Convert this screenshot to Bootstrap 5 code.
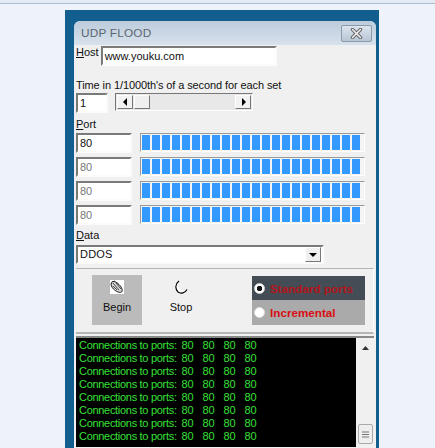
<!DOCTYPE html>
<html lang="en">
<head>
<meta charset="utf-8">
<title>UDP FLOOD</title>
<link href="https://cdn.jsdelivr.net/npm/bootstrap@5.3.0/dist/css/bootstrap.min.css" rel="stylesheet">
<style>
html,body{height:448px;overflow:hidden;}
body{background:#eef3fb;font-family:"Liberation Sans",Arial,sans-serif;font-size:11px;color:#111;line-height:13px;}
.topline{height:4px;border-bottom:1px solid #a9bdd2;background:#e3ebf5;}
.frame{width:314px;height:438px;margin:6px 0 0 65px;padding:11px 3px 0 9px;background:#125f8f;}
.win{width:302px;height:427px;border-radius:6px 6px 0 0;background:#f0f0f0;overflow:hidden;padding:0 2px 0 2px;}
.tbar{height:24px;margin:0 -2px;padding:0 4px 0 7px;background:linear-gradient(#bccbdc,#d8e2ec);color:#5c6670;font-size:11.8px;letter-spacing:.2px;border-radius:6px 6px 0 0;}
.xbtn{width:31px;height:17px;border:1px solid #8a9aab;border-radius:2px;background:linear-gradient(#dbe4ee,#b9c6d4);}
.sunk{background:#fff;border:2px solid;border-color:#7a7a7a #fbfbfb #fbfbfb #7a7a7a;height:20px;padding:0 1px 0 2px;font-size:11px;line-height:16px;white-space:nowrap;overflow:hidden;}
.lbl{height:13px;font-size:11px;white-space:nowrap;}
.host-row{height:20px;margin-top:1px;}
.host-in{width:176px;margin-left:2px;}
.time-lbl{margin-top:12px;height:15px;line-height:15px;font-size:11px;letter-spacing:-.1px;}
.time-row{height:20px;}
.num{width:32px;}
.sbar{width:138px;height:18px;margin-left:7px;background:#e8e8e8;border:1px solid;border-color:#777 #fff #fff #777;padding:1px;}
.sbtn{width:16px;background:#f2f2f2;border:1px solid;border-color:#fff #777 #777 #fff;}
.thumb{width:16px;margin-left:1px;background:#f0f0f0;border:1px solid;border-color:#fff #777 #777 #fff;}
.port-lbl{margin-top:5px;margin-bottom:2px;}
.port-row{height:20px;margin-bottom:4px;}
.port-in{width:56px;}
.port-in.off{color:#777;}
.port-bar.progress{width:225px;height:19px;margin-left:8px;border-radius:0;background:#f4f4f4;border:1px solid;border-color:#999 #fff #fff #999;padding:1px;overflow:hidden;}
.port-fill{flex:none;width:218px;height:100%;background:repeating-linear-gradient(90deg,#3399ff 0,#3399ff 8px,#f4f4f4 8px,#f4f4f4 10px);}
.data-lbl{margin-top:1px;}
.combo{width:248px;height:19px;margin-top:3px;padding-right:1px;font-size:11px;letter-spacing:.2px;line-height:15px;}
.cbtn{width:16px;height:15px;background:#f0f0f0;border:1px solid;border-color:#fff #777 #777 #fff;margin-left:auto;}
.grp{width:298px;height:66px;margin-top:4px;border-top:1px solid #b5b5b5;border-right:1px solid #fff;border-bottom:2px solid #b5b5b5;padding:6px 8px 0 16px;}
.tool{width:50px;height:50px;font-size:11px;color:#111;}
.tool.on{background:#bbb;}
.tool svg{margin-top:5px;margin-bottom:7px;}
.tool-stop{margin-left:14px;}
.radios{width:113px;height:49px;margin-left:auto;margin-top:1px;color:#d80f12;font-weight:700;font-size:11.7px;}
.rad{height:25px;padding-left:2px;gap:5px;background:#aaa;}
.rad.dark{background:#444d55;height:24px;color:#b3141a;}
.rad-dot{width:11px;height:11px;border-radius:50%;background:#fff;border:1px solid #ddd;flex:none;}
.rad-dot.sel{background:radial-gradient(circle,#111 0,#111 2.5px,#fff 3px);}
.logbox{width:298px;height:111px;margin-top:2px;background:#000;border-top:2px solid #888;color:#38e038;}
.loglines{padding:1px 0 0 3px;font-size:11px;line-height:13px;}
.logline{height:13px;white-space:nowrap;letter-spacing:-.3px;}
.lp{display:inline-block;width:21px;letter-spacing:0;}
.lp.first{margin-left:2px;}
.vsb{width:18px;background:#f0f0f0;}
.vthumb{width:15px;height:20px;margin:auto 0 0 1px;position:relative;top:-3px;background:#eee;border:1px solid #aaa;border-radius:2px;color:#777;}
</style>
</head>
<body>
<div class="topline"></div>
<div class="frame">
  <div class="win">
    <div class="tbar d-flex align-items-center justify-content-between">
      <span>UDP FLOOD</span>
      <span class="xbtn d-flex align-items-center justify-content-center">
        <svg width="13" height="11" viewBox="0 0 13 11"><path d="M2.500 1.500L10.500 9.500M10.500 1.500L2.500 9.500" stroke="#666" stroke-width="3.500" stroke-linecap="round"/><path d="M2.500 1.500L10.500 9.500M10.500 1.500L2.500 9.500" stroke="#f4f4f4" stroke-width="1.500" stroke-linecap="round"/></svg>
      </span>
    </div>
    <div class="host-row d-flex align-items-start">
      <span class="lbl"><u>H</u>ost</span>
      <div class="sunk host-in">www.youku.com</div>
    </div>
    <div class="lbl time-lbl">Time in 1/1000th's of a second for each set</div>
    <div class="time-row d-flex align-items-start">
      <div class="sunk num">1</div>
      <div class="sbar d-flex">
        <span class="sbtn d-flex align-items-center justify-content-center"><svg width="5" height="8"><path d="M4 0V8L0 4Z" fill="#000"/></svg></span>
        <span class="thumb"></span>
        <span class="sbtn ms-auto d-flex align-items-center justify-content-center"><svg width="5" height="8"><path d="M1 0V8L5 4Z" fill="#000"/></svg></span>
      </div>
    </div>
    <div class="lbl port-lbl"><u>P</u>ort</div>
    <div class="port-row d-flex align-items-start"><div class="sunk port-in">80</div><div class="progress port-bar"><div class="port-fill"></div></div></div>
    <div class="port-row d-flex align-items-start"><div class="sunk port-in off">80</div><div class="progress port-bar"><div class="port-fill"></div></div></div>
    <div class="port-row d-flex align-items-start"><div class="sunk port-in off">80</div><div class="progress port-bar"><div class="port-fill"></div></div></div>
    <div class="port-row d-flex align-items-start"><div class="sunk port-in off">80</div><div class="progress port-bar"><div class="port-fill"></div></div></div>
    <div class="lbl data-lbl"><u>D</u>ata</div>
    <div class="sunk combo d-flex align-items-start">DDOS
      <span class="cbtn d-flex align-items-center justify-content-center"><svg width="8" height="4"><path d="M0 0H8L4 4Z" fill="#000"/></svg></span>
    </div>
    <div class="grp d-flex align-items-start">
      <div class="tool on d-flex flex-column align-items-center">
        <svg width="14" height="14" viewBox="0 0 14 14"><rect width="14" height="14" fill="#fff"/><path d="M1.500 2.500C3 0.500 6 1.500 9 4.500C12 7.500 13 10.500 11.500 12C9.500 13 6 11.500 3.500 9C1.500 7 0.500 4.500 1.500 2.500Z" fill="#d8d8d8" stroke="#111"/><path d="M3 3L9 10M6 3L11 9M3 6L7 10M2 2L5 1" stroke="#222" stroke-width=".8" fill="none"/></svg>
        <span>Begin</span>
      </div>
      <div class="tool tool-stop d-flex flex-column align-items-center">
        <svg width="14" height="14" viewBox="0 0 14 14"><path d="M5 1C0.500 4 1 10 4.500 12.500C8 14 11.500 12.500 13 9.500C10 11 6.500 10.500 5 8C3.800 5.500 4 3 5 1Z" fill="#fff"/><path d="M5 1C1 4 1 9 4 12C7 14 11 13 13 9.500" fill="none" stroke="#000" stroke-width="1.200"/></svg>
        <span>Stop</span>
      </div>
      <div class="radios d-flex flex-column">
        <div class="rad dark d-flex align-items-center"><span class="rad-dot sel"></span><span>Standard ports</span></div>
        <div class="rad d-flex align-items-center"><span class="rad-dot"></span><span>Incremental</span></div>
      </div>
    </div>
    <div class="logbox d-flex justify-content-between">
      <div class="loglines">
        <div class="logline">Connections to ports: <span class="lp first">80</span><span class="lp">80</span><span class="lp">80</span><span class="lp">80</span></div>
        <div class="logline">Connections to ports: <span class="lp first">80</span><span class="lp">80</span><span class="lp">80</span><span class="lp">80</span></div>
        <div class="logline">Connections to ports: <span class="lp first">80</span><span class="lp">80</span><span class="lp">80</span><span class="lp">80</span></div>
        <div class="logline">Connections to ports: <span class="lp first">80</span><span class="lp">80</span><span class="lp">80</span><span class="lp">80</span></div>
        <div class="logline">Connections to ports: <span class="lp first">80</span><span class="lp">80</span><span class="lp">80</span><span class="lp">80</span></div>
        <div class="logline">Connections to ports: <span class="lp first">80</span><span class="lp">80</span><span class="lp">80</span><span class="lp">80</span></div>
        <div class="logline">Connections to ports: <span class="lp first">80</span><span class="lp">80</span><span class="lp">80</span><span class="lp">80</span></div>
        <div class="logline">Connections to ports: <span class="lp first">80</span><span class="lp">80</span><span class="lp">80</span><span class="lp">80</span></div>
      </div>
      <div class="vsb d-flex flex-column align-items-center">
        <svg class="mt-2" width="7" height="4"><path d="M0 4H7L3.500 0Z" fill="#333"/></svg>
        <div class="vthumb d-flex align-items-center justify-content-center"><svg width="7" height="7"><path d="M0 1H7M0 3.500H7M0 6H7" stroke="#777"/></svg></div>
      </div>
    </div>
  </div>
</div>
<script src="https://cdn.jsdelivr.net/npm/bootstrap@5.3.0/dist/js/bootstrap.bundle.min.js"></script>
</body>
</html>
